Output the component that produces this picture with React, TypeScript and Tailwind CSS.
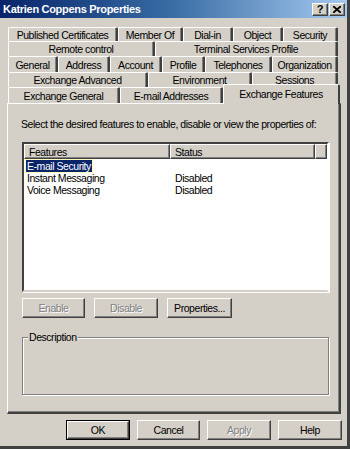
const font = "font-['Liberation_Sans',Arial,sans-serif]";

type Tab = { label: string; w: string; active?: boolean };

const tabRows: { h: string; tabs: Tab[] }[] = [
  {
    h: "h-[14px]",
    tabs: [
      { label: "Published Certificates", w: "w-[110px]" },
      { label: "Member Of", w: "w-[65px]" },
      { label: "Dial-in", w: "w-[50px]" },
      { label: "Object", w: "w-[50px]" },
      { label: "Security", w: "w-[55px]" },
    ],
  },
  {
    h: "h-[15px]",
    tabs: [
      { label: "Remote control", w: "w-[147px]" },
      { label: "Terminal Services Profile", w: "w-[183px]" },
    ],
  },
  {
    h: "h-[16px]",
    tabs: [
      { label: "General", w: "w-[50px]" },
      { label: "Address", w: "w-[52px]" },
      { label: "Account", w: "w-[52px]" },
      { label: "Profile", w: "w-[43px]" },
      { label: "Telephones", w: "w-[67px]" },
      { label: "Organization", w: "w-[66px]" },
    ],
  },
  {
    h: "h-[15px]",
    tabs: [
      { label: "Exchange Advanced", w: "w-[140px]" },
      { label: "Environment", w: "w-[104px]" },
      { label: "Sessions", w: "w-[86px]" },
    ],
  },
  {
    h: "h-[16px]",
    tabs: [
      { label: "Exchange General", w: "w-[112px]" },
      { label: "E-mail Addresses", w: "w-[103px]" },
      { label: "Exchange Features", w: "w-[117px]", active: true },
    ],
  },
];

const features = [
  { name: "E-mail Security", status: "" },
  { name: "Instant Messaging", status: "Disabled" },
  { name: "Voice Messaging", status: "Disabled" },
];

const raised =
  "border border-t-white border-l-white border-r-[#404040] border-b-[#404040] shadow-[inset_-1px_-1px_0_#808080]";

function TabItem({ tab }: { tab: Tab }) {
  if (tab.active) {
    return (
      <div
        className={`${tab.w} relative z-10 -mt-[3px] -mb-[1px] h-[20px] flex items-start justify-center pt-[3px] bg-[#d4d0c8] border-t border-l border-r-2 border-t-white border-l-white border-r-[#404040] rounded-t-[2px] text-[10.5px]`}
      >
        {tab.label}
      </div>
    );
  }
  return (
    <div
      className={`${tab.w} h-full flex items-center justify-center border-t border-l border-r-2 border-t-white border-l-white border-r-[#404040] rounded-t-[2px] shadow-[inset_-1px_0_0_#808080] text-[10.5px]`}
    >
      {tab.label}
    </div>
  );
}

function Button({
  label,
  disabled,
  isDefault,
  w,
}: {
  label: string;
  disabled?: boolean;
  isDefault?: boolean;
  w: string;
}) {
  const inner = (
    <div
      className={`h-full w-full flex items-center justify-center ${raised} ${
        disabled ? "text-[#808080] [text-shadow:1px_1px_0_#ffffff]" : "text-black"
      }`}
    >
      {label}
    </div>
  );
  if (isDefault) {
    return <div className={`${w} h-[20px] border border-black`}>{inner}</div>;
  }
  return <div className={`${w} h-[20px]`}>{inner}</div>;
}

export default function App() {
  return (
    <div
      className={`${font} w-[350px] h-[449px] bg-[#d4d0c8] text-[10.5px] leading-[12px] tracking-[-0.45px] text-black flex flex-col border-r-[3px] border-b-[3px] border-r-[#404040] border-b-[#404040] overflow-hidden whitespace-nowrap`}
    >
      {/* title bar */}
      <div className="h-[18px] shrink-0 flex items-center justify-between pl-[3px] pr-[2px] bg-gradient-to-r from-[#0a246a] via-[#3a6ea5] to-[#a6caf0]">
        <span className="text-white font-bold text-[11px] tracking-[-0.3px]">
          Katrien Coppens Properties
        </span>
        <div className="flex gap-[1px]">
          <div className={`w-[16px] h-[13px] bg-[#d4d0c8] ${raised} flex items-center justify-center font-bold text-[11px] leading-none`}>
            ?
          </div>
          <div className={`w-[16px] h-[13px] bg-[#d4d0c8] ${raised} flex items-center justify-center`}>
            <svg width="8" height="7" viewBox="0 0 8 7">
              <path d="M0 0 L8 7 M8 0 L0 7" stroke="#000" strokeWidth="1.8" />
            </svg>
          </div>
        </div>
      </div>

      {/* tabs */}
      <div className="pl-[8px] pt-[9px] flex flex-col">
        {tabRows.map((row, i) => (
          <div key={i} className={`${row.h} flex`}>
            {row.tabs.map((t) => (
              <TabItem key={t.label} tab={t} />
            ))}
          </div>
        ))}
      </div>

      {/* panel */}
      <div className="ml-[7px] w-[334px] h-[311px] shrink-0 border-t border-l border-r-2 border-b-2 border-t-white border-l-white border-r-[#404040] border-b-[#404040] shadow-[inset_-1px_-1px_0_#808080] px-[13px] pt-[14px]">
        <p>Select the desired features to enable, disable or view the properties of:</p>

        {/* list view */}
        <div className="mt-[12px] ml-[1px] w-[307px] h-[150px] bg-white border-2 border-t-[#404040] border-l-[#404040] border-r-white border-b-[#d4d0c8] shadow-[1px_1px_0_#ffffff]">
          <div className="h-[15px] flex bg-[#d4d0c8]">
            <div className={`w-[146px] h-full pl-[4px] flex items-center ${raised}`}>Features</div>
            <div className={`w-[145px] h-full pl-[4px] flex items-center ${raised}`}>Status</div>
            <div className={`flex-1 h-full ${raised}`} />
          </div>
          <div className="pt-[1px] flex flex-col">
            {features.map((f, i) => (
              <div key={f.name} className="h-[12px] flex">
                <div className="w-[146px] pl-[2px]">
                  <span
                    className={
                      i === 0
                        ? "bg-[#0a246a] text-white px-[1px] inline-block h-[12px] outline-1 outline-dotted outline-[#ffff80]"
                        : "px-[1px]"
                    }
                  >
                    {f.name}
                  </span>
                </div>
                <div className="pl-[5px]">{f.status}</div>
              </div>
            ))}
          </div>
        </div>

        {/* buttons */}
        <div className="mt-[6px] ml-[1px] flex gap-[9px]">
          <Button label="Enable" w="w-[63px]" disabled />
          <Button label="Disable" w="w-[64px]" disabled />
          <Button label="Properties..." w="w-[65px]" />
        </div>

        {/* description group */}
        <div className="mt-[19px] ml-[1px] w-[307px] h-[58px] border border-[#808080] shadow-[1px_1px_0_#ffffff,inset_1px_1px_0_#ffffff] relative">
          <span className="absolute -top-[7px] left-[5px] bg-[#d4d0c8] px-[1px]">Description</span>
        </div>
      </div>

      {/* bottom buttons */}
      <div className="mt-[6px] pl-[66px] flex gap-[7px]">
        <Button label="OK" w="w-[64px]" isDefault />
        <Button label="Cancel" w="w-[63px]" />
        <Button label="Apply" w="w-[64px]" disabled />
        <Button label="Help" w="w-[64px]" />
      </div>
    </div>
  );
}
